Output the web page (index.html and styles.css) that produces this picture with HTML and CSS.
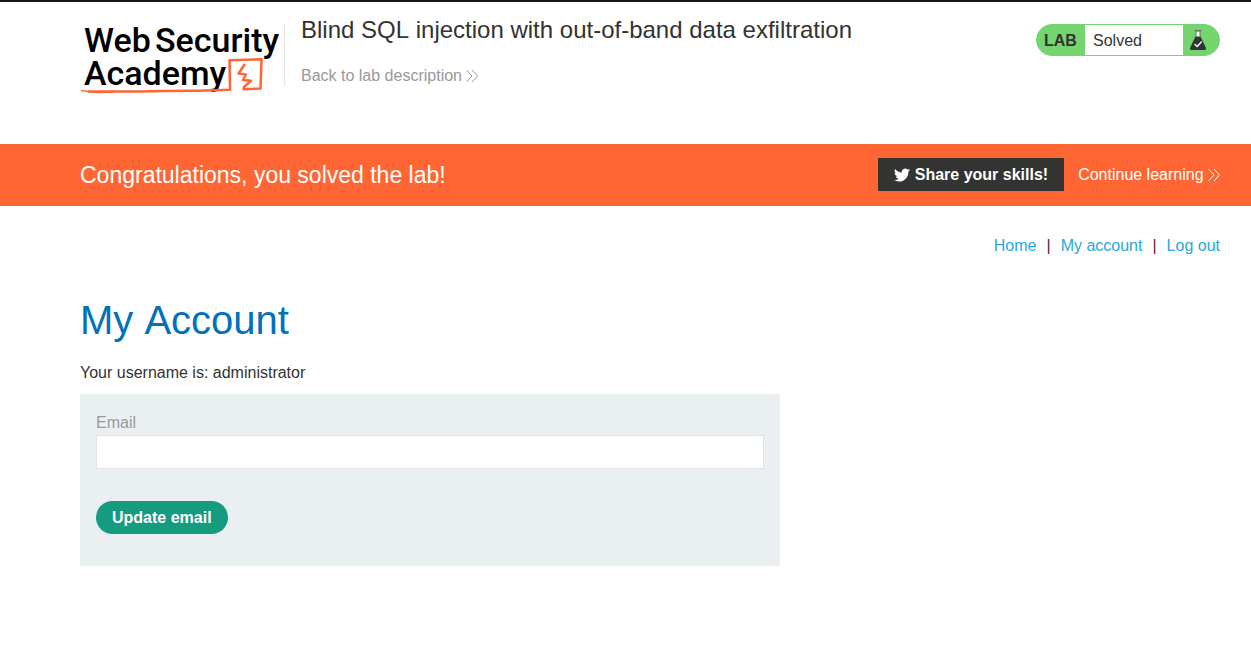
FILE: index.html
```html
<!DOCTYPE html>
<html lang="en">
<head>
<meta charset="utf-8">
<meta name="viewport" content="width=device-width, initial-scale=1">
<title>Blind SQL injection with out-of-band data exfiltration</title>
<link rel="stylesheet" href="styles.css">
</head>
<body>
<header class="lab-header container">
  <a class="logo" href="#" aria-label="Web Security Academy">
    <svg width="200" height="72" viewBox="0 0 200 72">
      <g class="logo-text">
        <text x="4" y="30">Web</text>
        <text x="75" y="30">Security</text>
        <text x="4" y="63">Academy</text>
      </g>
      <g class="logo-mark">
        <path d="M8 69.400 C45 70.300 85 68.500 118 68.800 L150 67.800 L149.500 38.300 L181.500 37.300 L180.500 66.600 L163.500 67.300 L164 65 L171 58.800 L163 58 L166 52.500 L158.500 51.500 L165 42"/>
        <path class="stroke-tail" d="M1 68.500 L16 70.400 L34 70"/>
      </g>
    </svg>
  </a>
  <div class="lab-title">
    <h2>Blind SQL injection with out-of-band data exfiltration</h2>
    <a class="link-back" href="#">Back to lab description
      <svg class="chevrons" width="12" height="14" viewBox="0 0 12 14"><path d="M.5 1 6 7 .5 13M6 1l5.500 6L6 13"/></svg></a>
  </div>
  <div class="lab-status">
    <span class="status-tag">LAB</span>
    <p class="status-text">Solved</p>
    <span class="status-icon">
      <svg width="16" height="20" viewBox="0 0 16 20">
        <path d="M6 2h4v5H6z" fill="#fff"/>
        <path d="M5.500 6.500h5L16 18q.2 2-1.500 2h-13Q-.2 20 0 18z" fill="#333332"/>
        <path d="M4.500 .5h7M6 1v6M10 1v6" fill="none" stroke="#5b7a57"/>
        <path d="m4.500 14 2.700 2.500 4.500-5" fill="none" stroke="#fff" stroke-width="1.300"/>
      </svg>
    </span>
  </div>
</header>
<section class="banner container">
  <h4>Congratulations, you solved the lab!</h4>
  <div class="banner-actions">
    <button class="share" type="button">
      <svg width="16" height="14" viewBox="0 2 24 20"><path fill="#fff" d="M24 4.560a9.800 9.800 0 0 1-2.830.780 4.900 4.900 0 0 0 2.160-2.730 9.900 9.900 0 0 1-3.130 1.200A4.920 4.920 0 0 0 11.820 8.300 14 14 0 0 1 1.670 3.150 4.930 4.930 0 0 0 3.190 9.720a4.900 4.900 0 0 1-2.230-.620 4.930 4.930 0 0 0 3.950 4.890 4.900 4.900 0 0 1-2.220.080 4.930 4.930 0 0 0 4.600 3.420A9.900 9.900 0 0 1 0 19.540 13.940 13.940 0 0 0 7.550 21.750c9.140 0 14.310-7.720 13.980-14.650A10 10 0 0 0 24 4.560z"/></svg>
      Share your skills!</button>
    <a class="continue" href="#">Continue learning
      <svg class="chevrons" width="12" height="14" viewBox="0 0 12 14"><path d="M.5 1 6 7 .5 13M6 1l5.500 6L6 13"/></svg></a>
  </div>
</section>
<main class="content container">
  <nav class="top-links">
    <a href="#">Home</a><span>|</span><a href="#">My account</a><span>|</span><a href="#">Log out</a>
  </nav>
  <h1>My Account</h1>
  <p class="username">Your username is: administrator</p>
  <form class="email-form">
    <label for="email">Email</label>
    <input id="email" type="email" name="email">
    <button class="update" type="submit">Update email</button>
  </form>
</main>
</body>
</html>
```
FILE: styles.css
```css
* { box-sizing: border-box; }

body {
  margin: 0;
  border-top: 2px solid #16151d;
  background: #fff;
  color: #333332;
  font: 16px/24px "Liberation Sans", Arial, sans-serif;
}

h1, h2, h4, p { margin: 0; font-weight: 400; }
h1, h2, h4 { font-kerning: none; }
a { text-decoration: none; }
button, input { font: inherit; }

.container { padding-left: 80px; padding-right: 31px; }

.lab-header {
  display: flex;
  align-items: flex-start;
  min-height: 142px;
  padding-top: 10px;
}

.logo { padding-top: 10px; }
.logo svg { display: block; overflow: visible; }
.logo-text { font: 500 34px Roboto, sans-serif; fill: #000; }
.logo-mark { fill: none; stroke: #f63; stroke-width: 2.500; stroke-linejoin: round; }
.stroke-tail { stroke-width: 1.500; }

.lab-title {
  flex: 1;
  margin: 12px 0 0 4px;
  padding-left: 16px;
  height: 62px;
  border-left: 1px solid #e5e5e5;
}
.lab-title h2 { margin-top: -10px; font-size: 24px; line-height: 32px; }
.link-back { display: inline-block; margin-top: 18px; color: #999; }

.chevrons { fill: none; stroke: currentColor; stroke-width: 1; vertical-align: -2px; }

.lab-status {
  display: flex;
  width: 184px;
  height: 32px;
  margin-top: 12px;
  border: 1px solid #74d46e;
  border-radius: 16px;
  overflow: hidden;
  background: #74d46e;
  line-height: 32px;
}
.status-tag { width: 48px; padding-left: 7px; font-weight: 700; }
.status-text { flex: 1; padding-left: 8px; background: #fff; }
.status-icon { width: 36px; padding: 5px 0 0 7px; line-height: 0; }

.banner {
  display: flex;
  align-items: center;
  justify-content: space-between;
  min-height: 62px;
  background: #f63;
  color: #fff;
}
.banner h4 { font-size: 23px; }
.banner-actions { display: flex; align-items: center; gap: 14px; }
.continue { color: #fff; }

.share {
  height: 33px;
  margin-bottom: 1px;
  padding: 0 16px;
  border: 0;
  background: #333332;
  color: #fff;
  font-weight: 700;
}
.share svg { vertical-align: -2px; }

.content { padding-top: 28px; padding-bottom: 81px; }
.top-links { display: flex; justify-content: flex-end; gap: 10px; color: #5b1a28; }
.top-links a { color: #29a7df; }

h1 { margin-top: 38px; font-size: 40px; line-height: 48px; color: #0071ba; }
.username { margin-top: 17px; }

.email-form {
  display: flex;
  flex-direction: column;
  align-items: flex-start;
  max-width: 700px;
  margin-top: 9px;
  padding: 17px 16px 32px;
  background: #eaeff2;
}
.email-form label { color: #999; }
.email-form input {
  width: 100%;
  height: 34px;
  padding: 0 8px;
  border: 1px solid #e2e2e2;
  background: #fff;
}
.update {
  height: 33px;
  margin-top: 32px;
  padding: 0 16px;
  border: 0;
  border-radius: 17px;
  background: #159b7f;
  color: #fff;
  font-weight: 700;
}
```
